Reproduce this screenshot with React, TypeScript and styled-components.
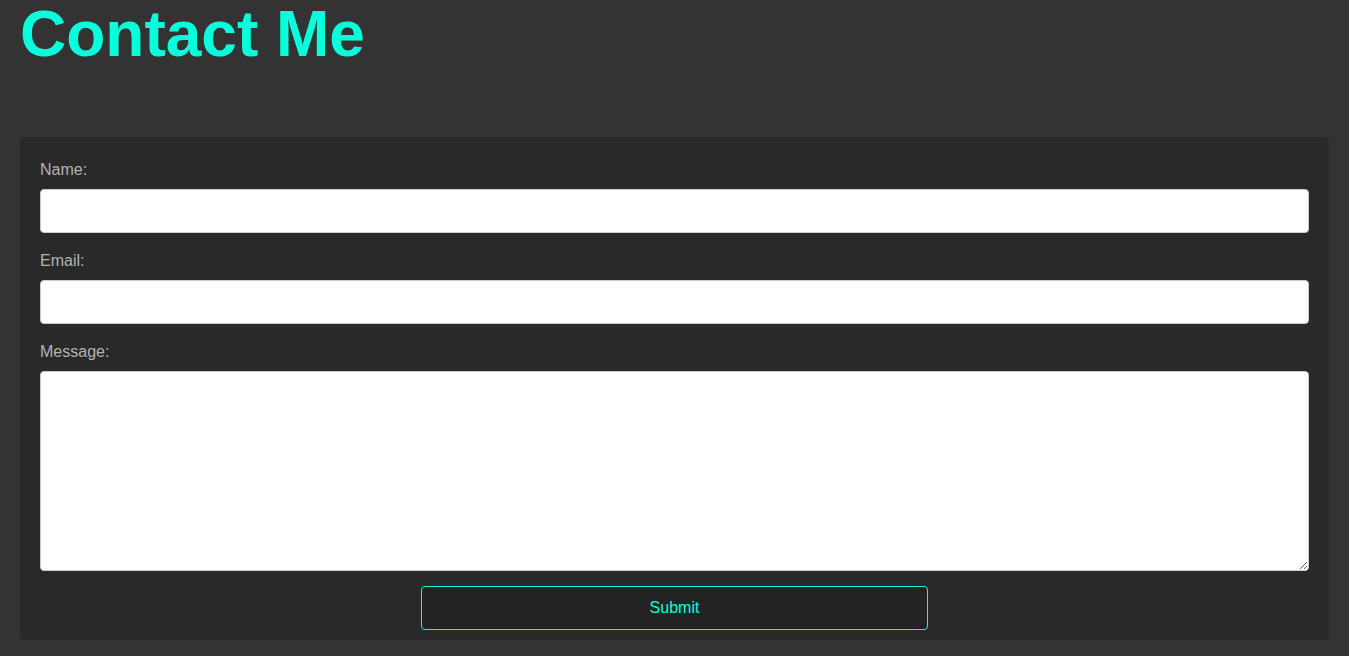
import React from "react";
import styled, { createGlobalStyle, css } from "styled-components";

const GlobalStyle = createGlobalStyle`
  *, *::before, *::after { box-sizing: border-box; }
  body {
    margin: 0;
    background: #333333;
    font-family: Arial, "Liberation Sans", sans-serif;
    font-size: 16px;
  }
`;

const Page = styled.main`
  display: flex;
  flex-direction: column;
  min-height: 100vh;
  padding: 0 20px 16px;
  border-right: 1px solid #ffffff;
`;

const Title = styled.h1`
  margin: 0 0 69px;
  color: #08ffdb;
  font-size: 64px;
  font-weight: 700;
  line-height: 68px;
`;

const Form = styled.form`
  display: flex;
  flex-direction: column;
  gap: 15px;
  padding: 20px 20px 10px;
  border-radius: 5px;
  background: #292929;
`;

const Field = styled.div`
  display: flex;
  flex-direction: column;
  gap: 6px;
`;

const Label = styled.label`
  color: #b3b3b3;
  line-height: 26px;
`;

const control = css`
  display: block;
  width: 100%;
  margin: 0;
  padding: 12px;
  border: 1px solid #cccccc;
  border-radius: 4px;
  background: #ffffff;
  color: #333333;
  font: inherit;
`;

const Input = styled.input`
  ${control}
  height: 44px;
`;

const TextArea = styled.textarea`
  ${control}
  height: 200px;
  resize: vertical;
`;

const SubmitButton = styled.button`
  align-self: center;
  width: 40%;
  height: 44px;
  border: 1px solid #08ffdb;
  border-radius: 4px;
  background: #232323;
  color: #08ffdb;
  font: inherit;
  cursor: pointer;
`;

export default function App() {
  return (
    <>
      <GlobalStyle />
      <Page>
        <Title>Contact Me</Title>
        <Form onSubmit={(event: React.FormEvent) => event.preventDefault()}>
          <Field>
            <Label htmlFor="name">Name:</Label>
            <Input id="name" name="name" type="text" />
          </Field>
          <Field>
            <Label htmlFor="email">Email:</Label>
            <Input id="email" name="email" type="email" />
          </Field>
          <Field>
            <Label htmlFor="message">Message:</Label>
            <TextArea id="message" name="message" />
          </Field>
          <SubmitButton type="submit">Submit</SubmitButton>
        </Form>
      </Page>
    </>
  );
}
